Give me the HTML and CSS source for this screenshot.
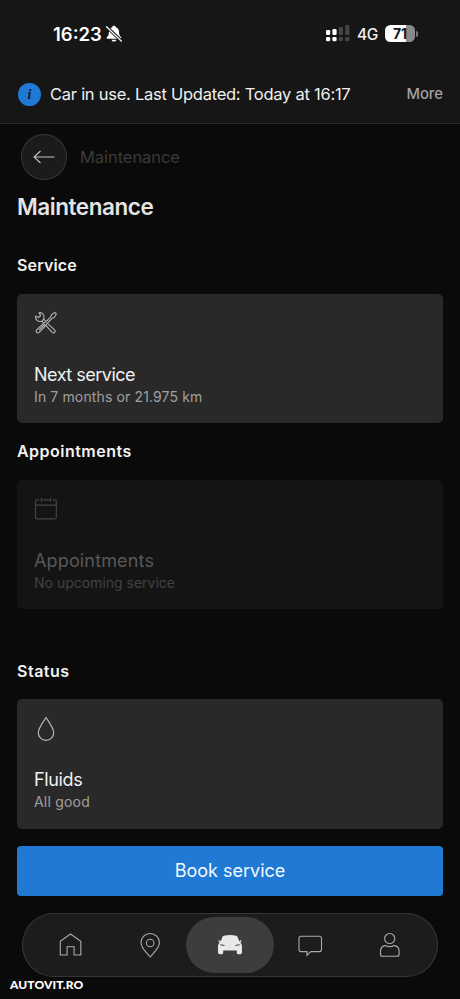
FILE: index.html
```html
<!DOCTYPE html>
<html lang="en">
<head>
<meta charset="utf-8">
<title>Maintenance</title>
<link rel="stylesheet" href="styles.css">
</head>
<body>
<div class="top">
  <div class="status">
    <span class="time">16:23</span>
    <svg class="bell" width="18" height="18" viewBox="0 0 18 18"><path d="M9 .8c-1 0-1.700.6-1.800 1.400C4.900 3 3.900 4.800 3.900 7.300c0 3-.8 3.700-2 5-.6.700-.3 1.500.5 1.500h13.200c.8 0 1.100-.8.500-1.500-1.200-1.300-2-2-2-5 0-2.500-1-4.300-3.300-5.100C10.700 1.400 10 .8 9 .8zM6.500 14.700h5c-.3 1.200-1.300 1.900-2.500 1.900s-2.200-.7-2.500-1.900z" fill="#fff"/><path d="M2 2.200l14 13.500" stroke="#161616" stroke-width="3.200"/><path d="M1.500 1.700l15 14.500" stroke="#fff" stroke-width="1.200" stroke-linecap="round"/></svg>
    <svg class="signal" width="24" height="17" viewBox="0 0 24 17"><g fill="#fff"><rect x="0" y="5" width="4.200" height="5" rx="1.200"/><rect x="6.400" y="4" width="4.200" height="6" rx="1.200"/><rect x="0" y="12" width="4.200" height="4.200" rx="1.200"/><rect x="6.400" y="12" width="4.200" height="4.200" rx="1.200"/></g><g fill="#444"><rect x="12.800" y="2" width="4.200" height="8" rx="1.200"/><rect x="19.200" y="0" width="4.200" height="10" rx="1.200"/><rect x="12.800" y="12" width="4.200" height="4.200" rx="1.200"/><rect x="19.200" y="12" width="4.200" height="4.200" rx="1.200"/></g></svg>
    <span class="network">4G</span>
    <span class="battery">71</span><span class="cap"></span>
  </div>
  <div class="banner">
    <span class="info">i</span>
    <span class="message">Car in use. Last Updated: Today at 16:17</span>
    <span class="more">More</span>
  </div>
</div>
<main>
  <div class="back-row">
    <span class="back"><svg width="46" height="46" viewBox="0 0 46 46"><path d="M33.500 23H13M19.500 17L13 23l6.500 6" fill="none" stroke="#c4c4c4" stroke-width="1.100"/></svg></span>
    <span class="crumb">Maintenance</span>
  </div>
  <h1><span>Maintenance</span></h1>
  <h2 class="h-service"><span>Service</span></h2>
  <section class="card">
    <svg width="24" height="24" viewBox="0 0 24 24" fill="none" stroke="#b5b5b5" stroke-width="1.100" stroke-linejoin="round"><path d="M9.800 8.200l1.900 1.900M14 12.900l6.600 6c1.700 1.700-.7 4.100-2.400 2.400l-5.900-6.500M7.800 10.200l1.700 1.700M1.700 5.100l2.900 1.500 2-1.900-1.500-3c3.600-.5 5.900 2.500 4.700 6.500l-2 2C4 11.200.900 8.500 1.700 5.100z"/><path d="M21.800 2.300l-1.100-.9-3.200 2.300-.6 1.900-5.400 5.500-1 .2-7.900 7.500c-1.600 1.600.9 4.200 2.600 2.600l7.500-7.900.2-1 5.500-5.400 1.800-.6 2.100-3.200zM5 19l6-6"/></svg>
    <h3><span class="t-next">Next service</span></h3>
    <p><span class="s-next">In 7 months or 21.975 km</span></p>
  </section>
  <h2 class="h-appointments"><span>Appointments</span></h2>
  <section class="card disabled">
    <svg width="24" height="24" viewBox="0 0 24 24" fill="none" stroke="#444" stroke-width="1.200"><path d="M5.100 2.800H3A1.500 1.500 0 0 0 1.500 4.300v16a1.500 1.500 0 0 0 1.500 1.500h17.800a1.500 1.500 0 0 0 1.500-1.500v-16a1.500 1.500 0 0 0-1.500-1.500h-2.100M8.300 2.800h7.200M7.300.8v4M16.500.8v4M1.500 8.200h20.800"/></svg>
    <h3><span class="t-app">Appointments</span></h3>
    <p><span class="s-app">No upcoming service</span></p>
  </section>
  <h2 class="h-status"><span>Status</span></h2>
  <section class="card">
    <svg width="24" height="26" viewBox="0 -1.500 24 26" fill="none" stroke="#b5b5b5" stroke-width="1.200"><path d="M12 0C8.500 5.400 4.300 10.700 4.300 15.200a7.700 7.700 0 0 0 15.400 0C19.700 10.700 15.500 5.400 12 0z"/></svg>
    <h3 class="h-fluids"><span class="t-fluids">Fluids</span></h3>
    <p><span class="s-fluids">All good</span></p>
  </section>
  <div class="book"><span>Book service</span></div>
</main>
<nav>
  <span class="tab"><svg width="26" height="26" viewBox="0 0 26 26"><path d="M3.300 23V9.300L13.500 2l10.300 7.300V23h-6.700v-8.200h-7V23z"/></svg></span>
  <span class="tab"><svg width="26" height="26" viewBox="0 0 26 26"><path d="M13.200 25C8.700 19.500 4 15.800 4 10.700a9.200 9.200 0 0 1 18.400 0C22.400 15.800 17.700 19.500 13.200 25z"/><circle cx="13.200" cy="11" r="3.800"/></svg></span>
  <span class="tab active"><svg width="26" height="26" viewBox="0 0 26 26"><path fill="#e8e8e8" stroke="none" fill-rule="evenodd" d="M6.800 3.800Q13 2.400 19.200 3.800c1 .2 1.400 1 1.700 1.900l1.300 3.600 1.600-1.100 1 .9-1.400 1.500c1.200 1.200 1.600 2.600 1.600 4.500v5.400q0 1.800-1.800 1.800h-2.100q-1.300 0-1.300-1.500v-2.200H6.200v2.200q0 1.500-1.300 1.500H2.800Q1 22.300 1 20.500v-5.400c0-1.900.4-3.300 1.600-4.500L1.200 9.100l1-.9 1.600 1.100 1.300-3.600c.3-.9.700-1.700 1.700-1.900zM3.400 12.200v1.100l4.100.8v-1.100zM22.600 12.200l-4.100.8v1.100l4.100-.8z"/></svg></span>
  <span class="tab"><svg width="26" height="26" viewBox="0 0 26 26"><path d="M4 4.200h18.500a2 2 0 0 1 2 2v11.400a2 2 0 0 1-2 2h-8.800L10 23.400v-3.800H4a2 2 0 0 1-2-2V6.200a2 2 0 0 1 2-2z"/></svg></span>
  <span class="tab"><svg width="26" height="26" viewBox="0 0 26 26"><circle cx="12.700" cy="6.600" r="5.100"/><path d="M8.500 13.600c2.900 1.500 5.700 1.500 8.600 0 3.200.2 5 2.300 5 6v2.600a2 2 0 0 1-2 2H5.500a2 2 0 0 1-2-2v-2.600c0-3.700 1.800-5.800 5-6z"/></svg></span>
</nav>
<div class="watermark">AUTOVIT.RO</div>
</body>
</html>
```
FILE: styles.css
```css
* { box-sizing: border-box; }
body { margin: 0; width: 460px; height: 999px; overflow: hidden; position: relative; background: #0a0a0a; color: #f0f0f0; font-family: Inter, sans-serif; }
h1, h2, h3, p { margin: 0; font-weight: 400; }
span { white-space: nowrap; }
svg { display: block; flex: none; }
.top { height: 124px; background: #161616; border-bottom: 1px solid #2a2a2a; }
.status { height: 64px; padding: 4px 0 0 53px; display: flex; align-items: center; }
.time { width: 52px; flex: none; font-size: 18.500px; font-weight: 600; color: #fff; letter-spacing: 0; }
.bell { margin-top: -1px; }
.signal { margin: -1px 0 0 203px; }
.network { width: 35px; flex: none; padding-left: 7px; font-size: 15.500px; font-weight: 500; letter-spacing: -.3px; }
.battery { width: 30px; flex: none; height: 17px; margin-top: -1px; border-radius: 5.500px; background: linear-gradient(90deg, #fff 71%, #8a8a8a 71%); color: #161616; font-size: 14px; line-height: 17px; font-weight: 700; text-align: center; }
.cap { width: 2px; flex: none; height: 6px; margin: -1px 0 0 1px; border-radius: 0 2px 2px 0; background: #777; }
.banner { height: 60px; padding: 0 17px 0 18px; display: flex; align-items: center; }
.info { width: 23px; height: 23px; border-radius: 50%; background: #2079d5; color: #101820; text-align: center; font: italic bold 14px/23px "Liberation Serif", serif; }
.message { margin-left: 9px; font-size: 16.500px; letter-spacing: -.26px; }
.more { margin-left: auto; font-size: 14.800px; font-weight: 500; color: #a2a2a2; }
main { padding: 0 17px; }
.back-row { height: 65px; padding: 0 0 0 4px; display: flex; align-items: center; }
.back { width: 46px; height: 46px; border-radius: 50%; background: #1b1b1b; box-shadow: inset 0 0 0 1px #383838; }
.crumb { margin-left: 13px; font-size: 16.500px; letter-spacing: -.06px; color: #3b3b3b; }
h1 { height: 36px; font-size: 22.500px; line-height: 36px; font-weight: 600; letter-spacing: -.45px; color: #e4e4e4; }
h2 { font-size: 16px; font-weight: 600; color: #f2f2f2; }
.h-service { height: 68.500px; padding-top: 30px; line-height: 20px; letter-spacing: .15px; }
.h-appointments { height: 56.500px; padding-top: 18px; line-height: 20px; letter-spacing: .48px; }
.h-status { height: 90px; padding-top: 52px; line-height: 20px; letter-spacing: .5px; }
.card { height: 129.500px; padding: 17px; border-radius: 5px; background: #292929; }
.card h3 { margin-top: 28px; font-size: 18px; line-height: 24px; color: #f0f0f0; }
.card .h-fluids { margin-top: 26px; }
.card p { font-size: 14px; line-height: 19px; color: #a0a0a0; }
.card.disabled h3 { color: #585858; }
.card.disabled p { color: #424242; }
.card.disabled { background: #141414; }
.t-next { letter-spacing: -.5px; }
.s-next { letter-spacing: .13px; }
.t-app { letter-spacing: .15px; }
.t-fluids { letter-spacing: -.35px; }
.s-fluids { letter-spacing: .2px; }
.book { height: 50px; margin-top: 17px; border-radius: 4px; background: #2079d3; text-align: center; line-height: 50px; font-size: 18px; color: #f4f9ff; }
nav { width: 416px; height: 64px; margin: 17px 0 0 22px; padding: 0 8px; display: flex; align-items: center; border-radius: 32px; background: #1c1c1c; box-shadow: inset 0 0 0 1px #363636; }
.tab { width: 80px; height: 56px; flex: none; display: flex; align-items: center; justify-content: center; }
.tab svg { fill: none; stroke: #aaa; stroke-width: 1.100; }
.active { width: 88px; margin: 0 -4px; border-radius: 28px; background: #3d3d3d; }
.watermark { position: absolute; left: 10px; top: 978px; font: 900 12px/14px Lato, sans-serif; letter-spacing: .1px; color: #fff; }
```
